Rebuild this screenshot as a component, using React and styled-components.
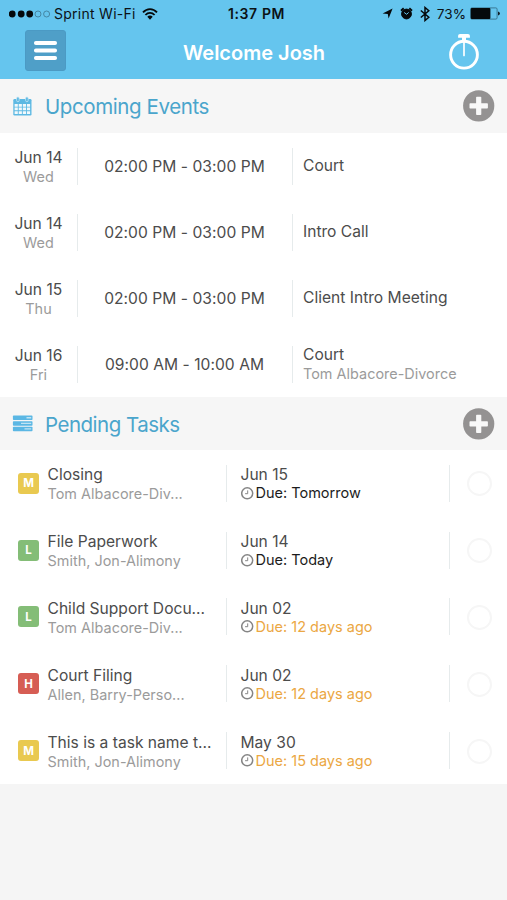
import React from 'react';
import styled, { createGlobalStyle } from 'styled-components';

const GlobalStyle = createGlobalStyle`
  * { box-sizing: border-box; }
  body {
    margin: 0;
    background: #f5f5f5;
    font-family: Inter, "Liberation Sans", sans-serif;
    color: #4c4c4c;
  }
`;

const Screen = styled.div`
  width: 507px;
  height: 900px;
  overflow: hidden;
  background: #f5f5f5;
`;

const Header = styled.header`
  height: 79px;
  background: #65c5ee;
`;

const StatusBar = styled.div`
  display: grid;
  grid-template-columns: 219px auto 1fr;
  align-items: center;
  height: 27px;
  padding: 0 7px 0 9px;
  color: #0b1216;
  font-size: 13.6px;
  line-height: 16px;
  white-space: nowrap;
`;

const StatusGroup = styled.div`
  display: flex;
  align-items: center;
  justify-content: ${(p) => (p.$end ? 'flex-end' : 'flex-start')};
`;

const Carrier = styled.span`
  margin: 0 6px 0 3px;
  font-size: 14px;
  letter-spacing: 0.27px;
`;

const Clock = styled.span`
  font-weight: 600;
  font-size: 14px;
  letter-spacing: 0.6px;
`;

const Percent = styled.span`
  margin: 0 4px 0 7px;
`;

const IconStrip = styled.span`
  display: flex;
  align-items: center;
  gap: 7px;
`;

const NavBar = styled.div`
  display: grid;
  grid-template-columns: 60px 1fr 60px;
  align-items: center;
  height: 49px;
  padding: 0 0 2px;
`;

const MenuButton = styled.button`
  display: flex;
  align-items: center;
  justify-content: center;
  width: 41px;
  height: 41px;
  margin-left: 25px;
  padding: 0;
  border: 1px solid #4b9ac4;
  border-radius: 3px;
  background: #4f9fc8;
`;

const PageTitle = styled.h1`
  margin: 4px 0 0 1px;
  color: #fff;
  font-size: 20px;
  font-weight: 600;
  line-height: 24px;
  text-align: center;
`;

const TimerButton = styled.button`
  display: flex;
  padding: 0;
  border: 0;
  margin: 2px 0 0 1px;
  background: none;
`;

const SectionHeader = styled.div`
  display: flex;
  align-items: center;
  height: ${(p) => p.$height}px;
  padding: 0 12px;
  background: #f6f6f6;
`;

const SectionIcon = styled.span`
  display: flex;
  width: 33px;
`;

const SectionTitle = styled.h2`
  flex: 1;
  margin: 0;
  padding-top: 2px;
  color: #4aa5cc;
  font-size: 20.5px;
  font-weight: 400;
  line-height: 26px;
  letter-spacing: ${(p) => p.$tracking}px;
`;

const AddButton = styled.button`
  display: flex;
  padding: 0;
  border: 0;
  background: none;
`;

const List = styled.div`
  background: #fff;
`;

const EventRow = styled.div`
  display: grid;
  grid-template-columns: 77px 215px 1fr;
  align-items: center;
  height: 66px;
`;

const TaskRow = styled.div`
  display: grid;
  grid-template-columns: 47.5px 178.5px 223px 1fr;
  align-items: center;
  height: 66.8px;
`;

const Cell = styled.div`
  display: flex;
  flex-direction: column;
  justify-content: center;
  height: 37px;
  min-width: 0;
  padding-left: ${(p) => p.$inset || 0}px;
  padding-bottom: ${(p) => p.$lift || 0}px;
  align-items: ${(p) => (p.$center ? 'center' : 'flex-start')};
  border-left: ${(p) => (p.$divided ? '1px solid #e6ebec' : '0')};
  white-space: nowrap;
`;

const Primary = styled.span`
  font-size: 15.6px;
  line-height: 19px;
`;

const Secondary = styled.span`
  color: #9b9b9b;
  font-size: 14.4px;
  line-height: 19px;
  letter-spacing: 0.03px;
`;

const DateStack = styled.div`
  display: flex;
  flex-direction: column;
  align-items: center;
  padding-top: 1px;
`;

const TaskText = styled.div`
  display: flex;
  flex-direction: column;
  padding-top: ${(p) => p.$drop}px;
`;

const TimeRange = styled(Primary)`
  letter-spacing: 0.04px;
  padding-right: 1px;
`;

const Due = styled.span`
  display: flex;
  align-items: center;
  gap: 2px;
  height: 18px;
  color: ${(p) => (p.$late ? '#eba743' : '#1c1c1c')};
  font-size: 14.5px;
  line-height: 18px;
`;

const Badge = styled.span`
  display: flex;
  align-items: center;
  justify-content: center;
  width: 21px;
  height: 21px;
  margin-left: 18px;
  border-radius: 3px;
  background: ${(p) => p.$color};
  color: #fff;
  font-size: 11.5px;
  font-weight: 700;
`;

const CheckCircle = styled.span`
  width: 25px;
  height: 25px;
  margin-top: 1px;
  border: 2px solid #f6f6f6;
  border-radius: 50%;
`;

const SignalIcon = () => (
  <svg width="42" height="10" viewBox="0 0 42 10">
    {[3, 12, 20.5].map((x) => (
      <circle key={x} cx={x + 0.2} cy="5" r="3.4" fill="#05090b" />
    ))}
    {[29, 37.6].map((x) => (
      <circle key={x} cx={x} cy="5" r="3" fill="none" stroke="#3c7690" strokeWidth=".8" />
    ))}
  </svg>
);

const WifiIcon = () => (
  <svg width="16" height="12" viewBox="0 0 16 12" fill="none" stroke="#05090b" strokeWidth="1.8">
    <path d="M1 4.4C5-.1 11-.1 15 4.4M3.4 7c2.7-2.9 6.5-2.9 9.2 0" />
    <path d="M5.3 8.8c1.6-1.6 3.8-1.6 5.4 0L8 11.7z" fill="#05090b" stroke="none" />
  </svg>
);

const LocationIcon = () => (
  <svg width="11" height="11" viewBox="0 0 11 11">
    <path d="M10.6.5 6.6 10.6 5.8 5.9.6 5.5z" fill="#05090b" />
  </svg>
);

const AlarmIcon = () => (
  <svg width="13" height="13" viewBox="0 0 13 13" fill="none" stroke="#05090b">
    <circle cx="6.5" cy="7" r="4.9" fill="#05090b" />
    <path d="M1 3.8 3.7 1.3M12 3.8 9.3 1.3" strokeWidth="1.9" />
    <path d="M6.7 7.3 4.2 5.5M6.7 7.3l2-1.9" stroke="#65c5ee" strokeWidth="1" />
  </svg>
);

const BluetoothIcon = () => (
  <svg width="10" height="16" viewBox="0 0 10 16" fill="none" stroke="#05090b" strokeWidth="1.5">
    <path d="M.8 4.5 8.8 11.3 5 14.5v-13l3.800 3.200L.8 11.500" />
  </svg>
);

const BatteryIcon = () => (
  <svg width="30" height="13" viewBox="0 0 30 13">
    <rect x=".6" y=".9" width="26.5" height="11.2" rx="1.3" fill="none" stroke="#36708b" strokeWidth=".9" />
    <rect x=".8" y="1" width="19.6" height="11" rx="1" fill="#05090b" />
    <path d="M28.1 4.5q1.700.4 1.700 2t-1.700 2z" fill="#05090b" />
  </svg>
);

const MenuIcon = () => (
  <svg width="25" height="21" viewBox="0 0 25 21" stroke="#fff" strokeWidth="3.9" strokeLinecap="round">
    <path d="M2.900 3h19.200M2.900 10.500h19.200M2.900 18h19.200" />
  </svg>
);

const StopwatchIcon = () => (
  <svg width="32" height="37" viewBox="0 0 32 37" fill="none">
    <circle cx="16" cy="21.700" r="13.400" stroke="#fff" strokeWidth="2.900" />
    <path d="M16 6v16.500" stroke="#fff" strokeWidth="1.700" strokeLinecap="round" />
    <path d="M12 .9h8q1.900 0 1.900 1.900v1.900H18V8h-4V4.700h-3.900V2.800q0-1.900 1.900-1.900z" fill="#fff" />
  </svg>
);

const CalendarIcon = () => (
  <svg width="21" height="20" viewBox="0 0 21 20">
    <path d="M2.500 3h15.800q1.200 0 1.200 1.200v14q0 1.200-1.200 1.200H2.500q-1.200 0-1.200-1.200v-14Q1.300 3 2.500 3z" fill="#5eb9e3" />
    <path
      d="M2.600 8h3.200v2.700H2.600zM6.700 8h3.200v2.700H6.700zM10.800 8H14v2.700h-3.200zM14.900 8h3.200v2.700h-3.200zM2.600 11.600h3.200v2.700H2.600zM6.700 11.600h3.200v2.700H6.700zM10.800 11.600H14v2.700h-3.200zM14.900 11.600h3.200v2.700h-3.200zM2.600 15.200h3.200V18H2.600zM6.700 15.200h3.200V18H6.700zM10.800 15.200H14V18h-3.200zM14.900 15.200h3.200V18h-3.200z"
      fill="#f2f9fc"
    />
    {[5, 14].map((x) => (
      <rect key={x} x={x - 0.4} y=".9" width="2.600" height="4.800" rx="1.300" fill="#5eb9e3" stroke="#d2ebf6" strokeWidth=".7" />
    ))}
  </svg>
);

const TasksIcon = () => (
  <svg width="21" height="17" viewBox="0 0 21 17">
    {[0.6, 6.2, 11.8].map((y) => (
      <rect key={y} x=".9" y={y} width="19.600" height="4.500" rx=".8" fill="#5bb7e4" />
    ))}
    <path d="M14.500 2.100h4.700v1.300h-4.700zM9 7.700h10.200V9H9zM12.500 13.300h6.700v1.300h-6.700z" fill="#c0e3f3" />
  </svg>
);

const AddIcon = () => (
  <svg width="32" height="32" viewBox="0 0 32 32">
    <circle cx="15.700" cy="15.900" r="15.600" fill="#949292" />
    <path
      d="M13.900 6.700h3.600q.8 0 .8.800v5.800h5.800q.8 0 .8.800v3.600q0 .8-.8.800h-5.800v5.800q0 .8-.8.800h-3.600q-.8 0-.8-.8v-5.800H7.300q-.8 0-.8-.8v-3.600q0-.8.8-.8h5.800V7.500q0-.8.8-.8z"
      fill="#f8f8f8"
    />
  </svg>
);

const DueIcon = () => (
  <svg width="13" height="13" viewBox="0 0 13 13" fill="none" stroke="#858585">
    <circle cx="6.200" cy="6.300" r="5.500" strokeWidth="1.500" />
    <path d="M6.700 3.400v3.300H4.100" strokeWidth="1" />
  </svg>
);

const events = [
  { date: 'Jun 14', day: 'Wed', time: '02:00 PM - 03:00 PM', title: 'Court' },
  { date: 'Jun 14', day: 'Wed', time: '02:00 PM - 03:00 PM', title: 'Intro Call' },
  { date: 'Jun 15', day: 'Thu', time: '02:00 PM - 03:00 PM', title: 'Client Intro Meeting' },
  { date: 'Jun 16', day: 'Fri', time: '09:00 AM - 10:00 AM', title: 'Court', matter: 'Tom Albacore-Divorce' },
];

const priorityColors = { L: '#84bd77', M: '#e9c950', H: '#d65d54' };

const tasks = [
  { priority: 'M', name: 'Closing', matter: 'Tom Albacore-Div...', date: 'Jun 15', due: 'Tomorrow' },
  { priority: 'L', name: 'File Paperwork', matter: 'Smith, Jon-Alimony', date: 'Jun 14', due: 'Today' },
  { priority: 'L', name: 'Child Support Docu...', matter: 'Tom Albacore-Div...', date: 'Jun 02', due: '12 days ago', late: true },
  { priority: 'H', name: 'Court Filing', matter: 'Allen, Barry-Perso...', date: 'Jun 02', due: '12 days ago', late: true },
  { priority: 'M', name: 'This is a task name t...', matter: 'Smith, Jon-Alimony', date: 'May 30', due: '15 days ago', late: true },
];

export default function App() {
  return (
    <Screen>
      <GlobalStyle />
      <Header>
        <StatusBar>
          <StatusGroup>
            <SignalIcon />
            <Carrier>Sprint Wi-Fi</Carrier>
            <WifiIcon />
          </StatusGroup>
          <Clock>1:37 PM</Clock>
          <StatusGroup $end>
            <IconStrip>
              <LocationIcon />
              <AlarmIcon />
              <BluetoothIcon />
            </IconStrip>
            <Percent>73%</Percent>
            <BatteryIcon />
          </StatusGroup>
        </StatusBar>
        <NavBar>
          <MenuButton aria-label="Menu"><MenuIcon /></MenuButton>
          <PageTitle>Welcome Josh</PageTitle>
          <TimerButton aria-label="Timer"><StopwatchIcon /></TimerButton>
        </NavBar>
      </Header>

      <SectionHeader $height={54}>
        <SectionIcon><CalendarIcon /></SectionIcon>
        <SectionTitle $tracking={-0.4}>Upcoming Events</SectionTitle>
        <AddButton aria-label="Add event"><AddIcon /></AddButton>
      </SectionHeader>
      <List>
        {events.map((e, i) => (
          <EventRow key={i}>
            <Cell $center>
              <DateStack>
                <Primary>{e.date}</Primary>
                <Secondary>{e.day}</Secondary>
              </DateStack>
            </Cell>
            <Cell $center $divided>
              <TimeRange>{e.time}</TimeRange>
            </Cell>
            <Cell $divided $inset={10} $lift={e.matter ? 0 : 2}>
              <Primary>{e.title}</Primary>
              {e.matter && <Secondary>{e.matter}</Secondary>}
            </Cell>
          </EventRow>
        ))}
      </List>

      <SectionHeader $height={53}>
        <SectionIcon><TasksIcon /></SectionIcon>
        <SectionTitle $tracking={-0.5}>Pending Tasks</SectionTitle>
        <AddButton aria-label="Add task"><AddIcon /></AddButton>
      </SectionHeader>
      <List>
        {tasks.map((t, i) => (
          <TaskRow key={i}>
            <Badge $color={priorityColors[t.priority]}>{t.priority}</Badge>
            <Cell>
              <TaskText $drop={2}>
                <Primary>{t.name}</Primary>
                <Secondary>{t.matter}</Secondary>
              </TaskText>
            </Cell>
            <Cell $divided $inset={13.5}>
              <TaskText $drop={1}>
                <Primary>{t.date}</Primary>
                <Due $late={t.late}><DueIcon />Due: {t.due}</Due>
              </TaskText>
            </Cell>
            <Cell $divided $inset={17}>
              <CheckCircle />
            </Cell>
          </TaskRow>
        ))}
      </List>
    </Screen>
  );
}
